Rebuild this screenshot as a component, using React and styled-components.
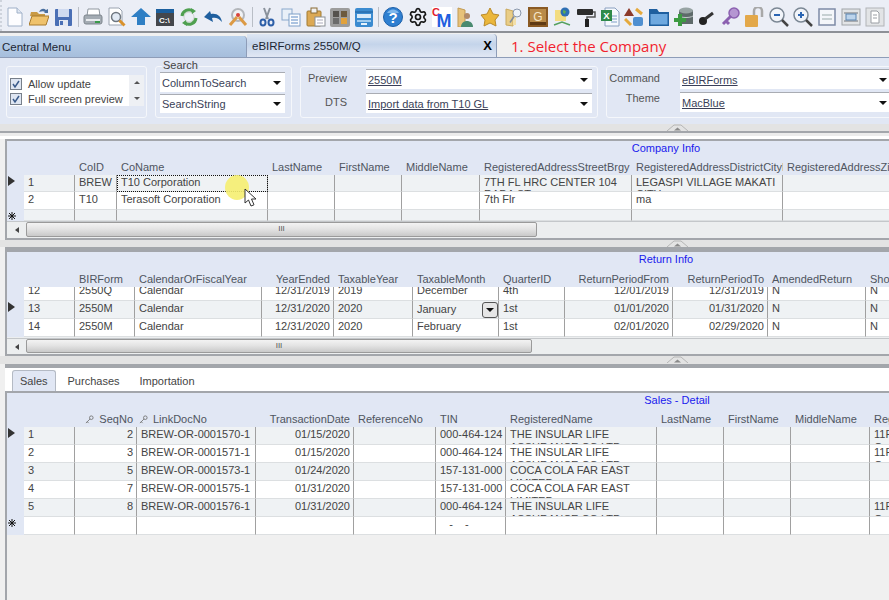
import React from 'react';
import styled, { createGlobalStyle } from 'styled-components';
import { Settings } from 'lucide-react';

const Global = createGlobalStyle`
  html, body { margin: 0; padding: 0; background: #f0f0f0; }
  body { font-family: "Liberation Sans", Arial, sans-serif; font-size: 11px; color: #444; overflow: hidden; }
  * { box-sizing: border-box; }
`;

const Page = styled.div`
  width: 889px;
  height: 600px;
  overflow: hidden;
  display: flex;
  flex-direction: column;
  background: #f0f0f0;
`;

const Toolbar = styled.div`
  height: 31px;
  flex: none;
  display: flex;
  align-items: center;
  gap: 4.1px;
  padding: 3px 0 0 3px;
  background: #ebeef6;
  border-left: 2px dotted #ced3dc;
  margin: 0;
`;

const ToolSep = styled.div`
  width: 1px;
  height: 20px;
  background: #b9bec6;
  margin: 0 0.3px;
  flex: none;
`;

const ToolIcon = styled.svg`
  width: 20px;
  height: 20px;
  flex: none;
`;

const Gear = styled(Settings)`
  width: 20px;
  height: 20px;
  flex: none;
  color: #161616;
`;

const Dark = styled.div`
  height: 2px;
  flex: none;
  background: #8d9096;
`;

const TabBar = styled.div`
  height: 25px;
  flex: none;
  display: flex;
  background: #f0f0f0;
  border-bottom: 1px solid #8e9db8;
`;

const Tab = styled.div`
  width: ${p => p.$w}px;
  margin-top: ${p => (p.$active ? 1 : 3)}px;
  display: flex;
  flex: none;
  align-items: center;
  justify-content: space-between;
  padding: 0 4px 0 ${p => p.$pad}px;
  font-size: 11.5px;
  color: #1d2733;
  border-right: 1px solid #8e9db8;
  border-top-right-radius: 4px;
  background: ${p => p.$active
    ? 'linear-gradient(#dfe7f3, #c4d4ea 45%, #e1e7f4)'
    : 'linear-gradient(#b9d0ea, #a6bedc)'};
`;

const CloseX = styled.span`
  font-weight: bold;
  font-size: 13px;
  color: #000;
`;

const Hint = styled.div`
  margin: 3px 0 0 14px;
  font-family: "Open Sans", sans-serif;
  font-size: 15px;
  color: #f21f2f;
`;

const Options = styled.div`
  height: 66px;
  flex: none;
  display: flex;
  gap: 8px;
  padding: 8px 0 0 6px;
  background: #e1e7f4;
`;

const Group = styled.div`
  position: relative;
  width: ${p => p.$w}px;
  height: 52px;
  flex: none;
  border: 1px solid #f5f7fb;
  border-radius: 3px;
  display: flex;
  flex-direction: column;
  gap: ${p => p.$gap || 0}px;
  padding: ${p => p.$pad};
`;

const Legend = styled.span`
  position: absolute;
  left: 6px;
  top: -8px;
  padding: 0 1px;
  line-height: 13px;
  background: #e1e7f4;
  color: #444;
`;

const CheckList = styled.div`
  width: 135px;
  height: 31px;
  background: #fff;
  display: flex;
  justify-content: space-between;
`;

const Checks = styled.div`
  display: flex;
  flex-direction: column;
  padding: 1px 0 0 1px;
`;

const CheckRow = styled.div`
  height: 15px;
  display: flex;
  align-items: center;
  gap: 6px;
  color: #444;
`;

const CheckBox = styled.span`
  width: 12px;
  height: 12px;
  border: 1px solid #777f8a;
  background: #dfe6f2;
  display: flex;
`;

const ListScroll = styled.div`
  width: 15px;
  background: #eef0f4;
  display: flex;
  flex-direction: column;
  justify-content: space-around;
  align-items: center;
`;

const ScrollUp = styled.span`
  border-left: 3px solid transparent;
  border-right: 3px solid transparent;
  border-bottom: 3px solid #555;
`;

const ScrollDown = styled.span`
  border-left: 3px solid transparent;
  border-right: 3px solid transparent;
  border-top: 3px solid #555;
`;

const FieldRow = styled.div`
  display: flex;
  align-items: center;
  gap: ${p => p.$gap}px;
  height: 20px;
  flex: none;
`;

const FieldLabel = styled.span`
  color: #555;
  text-align: right;
  width: ${p => p.$w}px;
  flex: none;
  margin-bottom: ${p => (p.$lift ? 8 : 2)}px;
`;

const Combo = styled.div`
  width: ${p => p.$w}px;
  height: ${p => p.$h || 20}px;
  flex: none;
  background: #fff;
  border-top: 1px solid #a9acb3;
  display: flex;
  align-items: center;
  justify-content: space-between;
  padding: 0 4px 0 2px;
  color: #3a3f58;
  text-decoration: ${p => (p.$link ? 'underline' : 'none')};
`;

const ComboArrow = styled.span`
  width: 0;
  height: 0;
  border-left: 4px solid transparent;
  border-right: 4px solid transparent;
  border-top: 4px solid #111;
  flex: none;
`;

const Splitter = styled.div`
  position: relative;
  height: ${p => p.$h}px;
  flex: none;
  display: flex;
  flex-direction: column;
`;

const SplitBody = styled.div`
  flex: 1;
  background: #e3e3e3;
`;

const SplitLine = styled.div`
  height: ${p => p.$line}px;
  flex: none;
  margin-left: ${p => p.$inset}px;
  background: #a3a6ab;
`;

const Grip = styled.svg`
  position: absolute;
  left: 667px;
  top: 0;
  width: 21px;
  height: 7px;
`;

const PanelGap = styled.div`
  height: 6px;
  flex: none;
  background: #fff;
  border-top: 3px solid #ececec;
`;

const GridPanel = styled.div`
  position: relative;
  flex: none;
  height: ${p => p.$h}px;
  margin-left: 5px;
  border: solid #a3a6ab;
  border-width: ${p => p.$bw};
  background: #e1e7f4;
  overflow: hidden;
  display: flex;
  flex-direction: column;
`;

const GridTitle = styled.div`
  height: ${p => p.$h}px;
  flex: none;
  text-align: center;
  line-height: 14px;
  padding-left: ${p => p.$pl}px;
  color: #1a1aee;
`;

const HeaderRow = styled.div`
  display: flex;
  height: ${p => p.$h}px;
  flex: none;
  padding: ${p => p.$pt}px 0 0 17px;
  line-height: 14px;
  color: #4f5560;
  white-space: nowrap;
`;

const HeadCell = styled.div`
  width: ${p => p.$w}px;
  flex: none;
  overflow: hidden;
  padding: 0 4px;
  text-align: ${p => (p.$right ? 'right' : 'left')};
`;

const KeyIcon = styled.svg`
  width: 9px;
  height: 9px;
  margin: 0 5px 0 -2px;
  vertical-align: -1px;
`;

const Rows = styled.div`
  flex: none;
  height: ${p => p.$h}px;
  overflow: hidden;
  background: #eceeef;
`;

const RowShift = styled.div`
  margin-top: ${p => p.$top}px;
`;

const Row = styled.div`
  display: flex;
  position: relative;
  height: ${p => p.$h || 18}px;
  padding-left: 17px;
  background: #e1e7f4;
`;

const Marker = styled.span`
  position: absolute;
  left: 1px;
  top: 1px;
  width: 0;
  height: 0;
  border-top: 5px solid transparent;
  border-bottom: 5px solid transparent;
  border-left: 7px solid #333;
`;

const Star = styled.svg`
  position: absolute;
  left: 1px;
  top: 2px;
  width: 8px;
  height: 8px;
`;

const Cell = styled.div`
  position: relative;
  width: ${p => p.$w}px;
  flex: none;
  height: 100%;
  overflow: hidden;
  padding: ${p => (p.$low ? 2 : 1)}px 3px 0 4px;
  line-height: ${p => p.$lh || 13}px;
  color: #444;
  white-space: pre;
  text-align: ${p => (p.$right ? 'right' : 'left')};
  background: ${p => (p.$alt ? '#eff2f4' : '#fff')};
  border-right: 1px solid #a0a0a0;
  border-bottom: 1px solid #dcdfe1;
  ${p => p.$focus && 'outline: 1px dotted #111; outline-offset: -1px;'}
`;

const CellButton = styled.span`
  position: absolute;
  right: 0;
  top: 1px;
  width: 16px;
  height: 16px;
  border: 1px solid #555;
  border-radius: 3px;
  background: #e6e6e6;
  display: flex;
  align-items: center;
  justify-content: center;
`;

const Cursor = styled.div`
  position: absolute;
  left: 218px;
  top: 34px;
  width: 32px;
  height: 34px;
`;

const CursorSpot = styled.div`
  width: 24px;
  height: 25px;
  border-radius: 50%;
  background: #f5ee70;
  opacity: 0.9;
`;

const CursorIcon = styled.svg`
  position: absolute;
  left: 19px;
  top: 13px;
  width: 13px;
  height: 20px;
`;

const HScroll = styled.div`
  flex: 1;
  display: flex;
  align-items: flex-start;
  background: #eceeef;
  border-top: 1px solid #c4c7ca;
`;

const ScrollLeft = styled.span`
  width: 19px;
  height: 15px;
  flex: none;
  display: flex;
  align-items: center;
  justify-content: center;
  &::before {
    content: '';
    border-top: 3px solid transparent;
    border-bottom: 3px solid transparent;
    border-right: 4px solid #444;
  }
`;

const ScrollThumb = styled.div`
  width: ${p => p.$w}px;
  height: ${p => p.$h}px;
  flex: none;
  border: 1px solid #9a9a9a;
  border-radius: 2px;
  background: linear-gradient(#f3f3f3, #e4e4e4 45%, #c9c9c9);
  color: #555;
  font-size: 8px;
  line-height: 12px;
  text-align: center;
`;

const TabStrip = styled.div`
  height: 25px;
  flex: none;
  margin-left: 5px;
  display: flex;
  align-items: flex-end;
  gap: 4px;
  padding-left: 7px;
  background: #fff;
  border-bottom: 2px solid #a3a6ab;
`;

const SubTab = styled.div`
  height: 21px;
  padding: 5px 8px 0;
  line-height: 13px;
  color: #444;
  ${p => p.$active && `
    background: #e1e7f4;
    border: 1px solid #b4bac4;
    border-bottom: none;
    border-radius: 3px 3px 0 0;
    padding: 4px 7px 0;
  `}
`;

const Bottom = styled.div`
  flex: 1;
  margin-left: 5px;
  background: #f0f0f0;
  border-left: 2px solid #a3a6ab;
`;

const Icon = ({ children }) => (
  <ToolIcon viewBox="0 0 20 20">{children}</ToolIcon>
);

const svgFont = 'Liberation Sans';

const fileIcons = [
  <g key="new"><path d="M3 1h9l5 5v13H3z" fill="#fdfdff" stroke="#9fb0c8" /><path d="M12 1v5h5" fill="#dfe6f1" stroke="#9fb0c8" /></g>,
  <g key="open"><path d="M1 9l1-4h6l2 2h6v3z" fill="#c99a45" /><path d="M0 18L3 9h17l-3 9z" fill="#efc26c" stroke="#a87b2d" /><path d="M10 5c2-4 5-4 7-2l2-1v4h-4l1-1c-1-1-3-1-6 0z" fill="#4a6f9f" /></g>,
  <g key="save"><rect x="2" y="2" width="17" height="17" rx="1" fill="#4a6fb5" /><rect x="5" y="2" width="11" height="8" fill="#cfdaf0" /><rect x="6" y="13" width="9" height="6" fill="#e3e8f2" /><rect x="7" y="14" width="3" height="4" fill="#4a6fb5" /></g>,
];

const printIcons = [
  <g key="print"><path d="M5 2h11l1 7H4z" fill="#fff" stroke="#8f979f" /><rect x="1" y="8" width="18" height="9" rx="2" fill="#a3abb3" stroke="#7d858d" /><rect x="3" y="12" width="14" height="2" fill="#e8ebee" /><rect x="12" y="14" width="5" height="2" fill="#3a9a4a" /></g>,
  <g key="preview"><path d="M2 1h10l3 3v14H2z" fill="#fff" stroke="#9aa3b0" /><circle cx="9" cy="10" r="4.5" fill="#e3ebf5" stroke="#6f7780" strokeWidth="1.5" /><path d="M12.5 13.5l5 5" stroke="#d9912b" strokeWidth="3" /></g>,
  <path key="up" d="M10 1l10 9h-6v8H6v-8H0z" fill="#2f7fc4" />,
  <g key="cmd"><rect x="1" y="2" width="18" height="17" fill="#44474c" /><rect x="1" y="2" width="18" height="4" fill="#1b5f9e" /><text x="4" y="16" fontSize="8" fontWeight="bold" fill="#fff" fontFamily={svgFont}>C:\</text></g>,
  <g key="refresh"><circle cx="10" cy="10" r="5" fill="none" stroke="#cfd5cf" /><g fill="none" stroke="#4fa050" strokeWidth="3"><path d="M3 9a7 7 0 0 1 11-5" /><path d="M17 11a7 7 0 0 1-11 5" /></g><path d="M12 1l5 3-4 3zM8 19l-5-3 4-3z" fill="#4fa050" /></g>,
  <path key="undo" d="M1 10l6-6 1 3c6-1 10 2 11 8-3-4-7-5-10-4l1 4z" fill="#1f5f9f" />,
  <g key="tools"><circle cx="10" cy="8" r="6" fill="#f0f2f5" stroke="#b3b6bb" strokeWidth="2" /><circle cx="10" cy="8" r="2" fill="#d8433c" /><path d="M2 18l7-8M18 18l-7-8" stroke="#dc9a45" strokeWidth="3" /></g>,
];

const editIcons = [
  <g key="cut"><path d="M7 1l4 11M13 1L9 12" stroke="#8a929c" strokeWidth="2" fill="none" /><g fill="none" stroke="#2d5fa8" strokeWidth="2"><ellipse cx="6" cy="15.5" rx="2.5" ry="3" /><ellipse cx="14" cy="15.5" rx="2.5" ry="3" /></g></g>,
  <g key="copy"><rect x="1" y="2" width="10" height="11" fill="#e9f0f8" stroke="#8aa8cc" /><rect x="8" y="7" width="11" height="12" fill="#fbfcfe" stroke="#7f9fc8" /><path d="M10 10h7M10 13h7M10 16h7" stroke="#5c8ac4" /></g>,
  <g key="paste"><rect x="1" y="4" width="14" height="15" rx="1" fill="#dca954" stroke="#a07a33" /><rect x="5" y="1" width="6" height="5" fill="#f1f1f1" stroke="#8a6a33" /><rect x="9" y="10" width="10" height="9" fill="#fff" stroke="#8a8f96" /><path d="M11 13h6M11 16h6" stroke="#aab" /></g>,
  <g key="layout"><rect x="0" y="1" width="20" height="19" rx="2" fill="#9c9c9c" /><rect x="3" y="4" width="6" height="6" fill="#54514d" /><rect x="11" y="4" width="6" height="6" fill="#6c5a3e" /><rect x="3" y="11" width="6" height="6" fill="#6b6b6b" /><rect x="11" y="11" width="6" height="6" fill="#e2a23c" /></g>,
  <g key="card"><rect x="1" y="1" width="18" height="19" rx="2" fill="#3b8bd0" /><path d="M1 5h18" stroke="#1e5f9c" /><rect x="3" y="7" width="14" height="4" fill="#d8eafa" /><rect x="3" y="13" width="14" height="2" fill="#9fcbee" /><rect x="7" y="16" width="6" height="2" fill="#e6f2fb" /></g>,
];

const helpIcon = (
  <g><circle cx="10" cy="10" r="9.5" fill="#2f7fd1" stroke="#1c5fa8" /><path d="M4 6a7 7 0 0 1 12 0z" fill="#7fb8ec" /><text x="10" y="16" textAnchor="middle" fontSize="15" fontWeight="bold" fill="#fff" fontFamily={svgFont}>?</text></g>
);

const extraIcons = [
  <g key="cm"><rect x="0" y="0" width="20" height="20" fill="#fff" /><text x="0" y="8.5" fontSize="11" fontWeight="bold" fill="#e2202c" fontFamily={svgFont}>C</text><text x="4.5" y="20" fontSize="18" fontWeight="bold" fill="#1f5fe0" fontFamily={svgFont} textLength="15" lengthAdjust="spacingAndGlyphs">M</text></g>,
  <g key="person"><path d="M2 1l7 2v17H2z" fill="#e7c27a" stroke="#c39b52" /><circle cx="11" cy="9" r="3" fill="#b08a6a" /><path d="M5 20c0-8 12-8 12 0z" fill="#4a8a70" /></g>,
  <path key="star" d="M10 1l3 6 6 1-4 5 1 6-6-3-6 3 1-6-4-5 6-1z" fill="#ebb73c" stroke="#b98a2a" />,
  <g key="findfolder"><path d="M2 2l7 2v15l-7-1z" fill="#e9cd87" stroke="#c9a95f" /><path d="M9 4h3v14H9z" fill="#f2dfaa" /><circle cx="13" cy="6" r="4" fill="#eef3fa" stroke="#8a97ac" /><path d="M10 9.5l-4 6" stroke="#7f8a99" strokeWidth="1.5" /></g>,
  <g key="g"><rect x="0" y="0" width="20" height="20" fill="#8a5a24" /><rect x="2" y="2" width="16" height="13" fill="#b98b49" /><rect x="2" y="15" width="16" height="3" fill="#5f3a14" /><text x="10" y="13.5" textAnchor="middle" fontSize="12" fill="#f6e6c8" fontFamily={svgFont}>G</text></g>,
  <g key="globe"><path d="M3 3h11v11H3z" fill="#f3dc80" /><circle cx="13" cy="5" r="4.5" fill="#2d6fb3" /><path d="M11 3l3 1-1 3-2-1z" fill="#5cab55" /><path d="M2 18l8-3 8 3" stroke="#55a060" strokeWidth="1.5" fill="none" /></g>,
  <g key="roller"><rect x="1" y="2" width="16" height="6" rx="1" fill="#2c2c2c" /><path d="M17 5h2v5h-8v3" fill="none" stroke="#555" strokeWidth="1.5" /><rect x="9" y="12" width="4" height="8" fill="#222" /></g>,
  <g key="excel"><path d="M5 1h10l4 4v14H5z" fill="#f6f9fd" stroke="#8aa0c0" /><path d="M11 9h6M11 12h6M11 15h6" stroke="#7f9fc8" /><rect x="1" y="3" width="11" height="11" fill="#2f8a4a" /><text x="6.5" y="12" textAnchor="middle" fontSize="9.5" fontWeight="bold" fill="#fff" fontFamily={svgFont}>X</text></g>,
  <g key="convert"><path d="M5 1l5 8H0z" fill="#8c3a2a" /><rect x="9" y="10" width="10" height="9" rx="2" fill="#4f8fd0" /><path d="M1 12l6 6M12 2l6 5" stroke="#e5a93c" strokeWidth="3" /></g>,
  <g key="folder"><path d="M0 2h8l2 3h10v14H0z" fill="#1f5f9f" /><rect x="1.5" y="7" width="17" height="10.5" fill="#6ea8df" /></g>,
  <g key="db"><rect x="6" y="3" width="14" height="14" fill="#5e6a6a" /><ellipse cx="13" cy="3.5" rx="7" ry="3" fill="#98a4a4" /><path d="M6 9c3 2 11 2 14 0" stroke="#c0c8c8" fill="none" /><path d="M5 7h4v4h4v4H9v4H5v-4H1v-4h4z" fill="#3c9a42" /></g>,
  <g key="keyblack"><circle cx="6" cy="14" r="4" fill="#222" /><path d="M8 12l8-6" stroke="#333" strokeWidth="3" /></g>,
  <g key="keypurple"><circle cx="13" cy="6" r="5" fill="#b596d2" stroke="#8b60b0" strokeWidth="1.5" /><path d="M10 9l-8 8M5 14l3 3" stroke="#8b60b0" strokeWidth="3" /></g>,
  <g key="lock"><rect x="0" y="8" width="13" height="12" rx="1" fill="#e3a84a" /><path d="M9 8V4a4 4 0 0 1 8 0v6" fill="none" stroke="#a8a8a8" strokeWidth="2.5" /></g>,
  <g key="zoomout"><circle cx="8" cy="8" r="7" fill="#f2f5fa" stroke="#7b8794" strokeWidth="1.5" /><path d="M5 8h6" stroke="#2b65b3" strokeWidth="2" /><path d="M13 13l6 6" stroke="#444" strokeWidth="2.5" /></g>,
  <g key="zoomin"><circle cx="8" cy="8" r="7" fill="#f2f5fa" stroke="#7b8794" strokeWidth="1.5" /><path d="M5 8h6M8 5v6" stroke="#2b65b3" strokeWidth="2" /><path d="M13 13l6 6" stroke="#444" strokeWidth="2.5" /></g>,
  <g key="fit"><rect x="2" y="2" width="16" height="16" fill="#f4f6fa" stroke="#7e8aa6" strokeWidth="1.5" /><path d="M5 8h10M5 12h10" stroke="#9aa" /></g>,
  <g key="frame"><rect x="1" y="2" width="18" height="16" fill="#e2e4e6" stroke="#a0a4a8" /><path d="M3 6h14M3 14h14" stroke="#70757a" /><rect x="5" y="7" width="10" height="6" fill="#bcd4ec" stroke="#5c86b2" /></g>,
  <g key="page"><rect x="1" y="1" width="18" height="18" fill="#e2e4e6" stroke="#b2b4b8" /><path d="M6 4h6l2 2v10H6z" fill="#fff" stroke="#9a9ea4" /><path d="M8 8h4M8 11h4" stroke="#9a9ea4" /></g>,
];

const columns1 = [
  { w: 51, h: '' }, { w: 42, h: 'CoID' }, { w: 151, h: 'CoName' }, { w: 67, h: 'LastName' },
  { w: 67, h: 'FirstName' }, { w: 78, h: 'MiddleName' }, { w: 152, h: 'RegisteredAddressStreetBrgy' },
  { w: 151, h: 'RegisteredAddressDistrictCityPr' }, { w: 120, h: 'RegisteredAddressZip' },
];
const rows1 = [
  ['1', 'BREW', 'T10 Corporation', '', '', '', '7TH FL HRC CENTER 104\nRADA ST', 'LEGASPI VILLAGE MAKATI\nCITY', ''],
  ['2', 'T10', 'Terasoft Corporation', '', '', '', '7th Flr', 'ma', ''],
  ['', '', '', '', '', '', '', '', ''],
];

const columns2 = [
  { w: 51, h: '' }, { w: 60, h: 'BIRForm' }, { w: 127, h: 'CalendarOrFiscalYear' },
  { w: 72, h: 'YearEnded', right: true }, { w: 79, h: 'TaxableYear' }, { w: 86, h: 'TaxableMonth' },
  { w: 66, h: 'QuarterID' }, { w: 108, h: 'ReturnPeriodFrom', right: true },
  { w: 95, h: 'ReturnPeriodTo', right: true }, { w: 98, h: 'AmendedReturn' }, { w: 60, h: 'ShortPeriod' },
];
const rows2 = [
  ['12', '2550Q', 'Calendar', '12/31/2019', '2019', 'December', '4th', '12/01/2019', '12/31/2019', 'N', 'N'],
  ['13', '2550M', 'Calendar', '12/31/2020', '2020', 'January', '1st', '01/01/2020', '01/31/2020', 'N', 'N'],
  ['14', '2550M', 'Calendar', '12/31/2020', '2020', 'February', '1st', '02/01/2020', '02/29/2020', 'N', 'N'],
];

const columns3 = [
  { w: 51, h: '' }, { w: 62, h: 'SeqNo', right: true, key: true }, { w: 119, h: 'LinkDocNo', key: true },
  { w: 98, h: 'TransactionDate', right: true }, { w: 82, h: 'ReferenceNo' }, { w: 70, h: 'TIN' },
  { w: 151, h: 'RegisteredName' }, { w: 67, h: 'LastName' }, { w: 67, h: 'FirstName' },
  { w: 79, h: 'MiddleName' }, { w: 60, h: 'RegisteredAddress' },
];
const insular = 'THE INSULAR LIFE\nASSURANCE CO LTD';
const coca = 'COCA COLA FAR EAST\nLIMITED';
const rows3 = [
  ['1', '2', 'BREW-OR-0001570-1', '01/15/2020', '', '000-464-124', insular, '', '', '', '11F\nG'],
  ['2', '3', 'BREW-OR-0001571-1', '01/15/2020', '', '000-464-124', insular, '', '', '', '11F\nG'],
  ['3', '5', 'BREW-OR-0001573-1', '01/24/2020', '', '157-131-000', coca, '', '', '', ''],
  ['4', '7', 'BREW-OR-0001575-1', '01/31/2020', '', '157-131-000', coca, '', '', '', ''],
  ['5', '8', 'BREW-OR-0001576-1', '01/31/2020', '', '000-464-124', insular, '', '', '', '11F\nG'],
  ['', '', '', '', '', '   -    -', '', '', '', '', ''],
];

const Key = () => (
  <KeyIcon viewBox="0 0 10 10">
    <circle cx="7" cy="3" r="2" fill="none" stroke="#777" />
    <path d="M5.5 4.5L1 9M2.5 7.5l1.5 1.5" stroke="#777" fill="none" />
  </KeyIcon>
);

const Head = ({ columns, h, pt }) => (
  <HeaderRow $h={h} $pt={pt}>
    {columns.map((c, i) => (
      <HeadCell key={i} $w={c.w} $right={c.right}>
        {c.key && <Key />}{c.h}
      </HeadCell>
    ))}
  </HeaderRow>
);

const Check = () => (
  <CheckBox>
    <svg viewBox="0 0 10 10" width="10" height="10">
      <path d="M2 5l2 3 4-6" fill="none" stroke="#3a5a8a" strokeWidth="1.5" />
    </svg>
  </CheckBox>
);

const NewRowStar = () => (
  <Star viewBox="0 0 8 8">
    <path d="M4 0v8M0 4h8M1 1l6 6M7 1L1 7" stroke="#111" strokeWidth="1" />
  </Star>
);

const Split = ({ h, line, inset }) => (
  <Splitter $h={h}>
    <SplitBody />
    <SplitLine $line={line} $inset={inset} />
    <Grip viewBox="0 0 21 7">
      <path d="M0 7L7 1h7l7 6" fill="none" stroke="#b5b5b5" />
      <path d="M7 6.5l3.5-3 3.5 3z" fill="#8a8a8a" />
    </Grip>
  </Splitter>
);

export default function App() {
  return (
    <Page>
      <Global />
      <Toolbar>
        {fileIcons.map((x, i) => <Icon key={i}>{x}</Icon>)}
        <ToolSep />
        {printIcons.map((x, i) => <Icon key={i}>{x}</Icon>)}
        <ToolSep />
        {editIcons.map((x, i) => <Icon key={i}>{x}</Icon>)}
        <ToolSep />
        <Icon>{helpIcon}</Icon>
        <Gear strokeWidth={2} />
        {extraIcons.map((x, i) => <Icon key={i}>{x}</Icon>)}
      </Toolbar>
      <Dark />
      <TabBar>
        <Tab $w={247} $pad={2}>Central Menu</Tab>
        <Tab $w={250} $pad={5} $active>eBIRForms 2550M/Q<CloseX>X</CloseX></Tab>
        <Hint>1. Select the Company</Hint>
      </TabBar>
      <Options>
        <Group $w={141} $pad="8px 0 0 2px">
          <CheckList>
            <Checks>
              <CheckRow><Check />Allow update</CheckRow>
              <CheckRow><Check />Full screen preview</CheckRow>
            </Checks>
            <ListScroll><ScrollUp /><ScrollDown /></ListScroll>
          </CheckList>
        </Group>
        <Group $w={137} $pad="5px 0 0 4px" $gap={2}>
          <Legend>Search</Legend>
          <Combo $w={125}>ColumnToSearch<ComboArrow /></Combo>
          <Combo $w={125} $h={19}>SearchString<ComboArrow /></Combo>
        </Group>
        <Group $w={298} $pad="2px 0 0 0" $gap={4}>
          <FieldRow $gap={19}><FieldLabel $w={46}>Preview</FieldLabel><Combo $w={226} $link>2550M<ComboArrow /></Combo></FieldRow>
          <FieldRow $gap={19}><FieldLabel $w={46}>DTS</FieldLabel><Combo $w={226} $link>Import data from T10 GL<ComboArrow /></Combo></FieldRow>
        </Group>
        <Group $w={300} $pad="2px 0 0 0" $gap={3}>
          <FieldRow $gap={20}><FieldLabel $w={53}>Command</FieldLabel><Combo $w={211} $link>eBIRForms<ComboArrow /></Combo></FieldRow>
          <FieldRow $gap={20}><FieldLabel $w={53} $lift>Theme</FieldLabel><Combo $w={211} $link>MacBlue<ComboArrow /></Combo></FieldRow>
        </Group>
      </Options>
      <Split h={9} line={2} inset={0} />
      <PanelGap />
      <GridPanel $h={101} $bw="2px 0 2px 2px">
        <GridTitle $h={17} $pl={436}>Company Info</GridTitle>
        <Head columns={columns1} h={17} pt={2} />
        {rows1.map((r, ri) => (
          <Row key={ri} $h={ri === 2 ? 11 : ri === 0 ? 17 : 18}>
            {ri === 0 && <Marker />}
            {ri === 2 && <NewRowStar />}
            {columns1.map((c, i) => (
              <Cell key={i} $w={c.w} $alt={ri !== 1} $focus={ri === 0 && i === 2} $lh={ri === 0 ? 12 : 13}>{r[i]}</Cell>
            ))}
          </Row>
        ))}
        <HScroll><ScrollLeft /><ScrollThumb $w={511} $h={15}>III</ScrollThumb></HScroll>
        <Cursor>
          <CursorSpot />
          <CursorIcon viewBox="0 0 13 20">
            <path d="M1 1v14l3.5-3 2.5 6 3-1.2-2.5-5.8H12z" fill="#fff" stroke="#333" />
          </CursorIcon>
        </Cursor>
      </GridPanel>
      <Split h={12} line={5} inset={5} />
      <GridPanel $h={104} $bw="0 0 2px 2px">
        <GridTitle $h={16} $pl={436}>Return Info</GridTitle>
        <Head columns={columns2} h={19} pt={4} />
        <Rows $h={51}>
          <RowShift $top={-4}>
            {rows2.map((r, ri) => (
              <Row key={ri}>
                {ri === 1 && <Marker />}
                {columns2.map((c, i) => (
                  <Cell key={i} $w={c.w} $right={c.right} $alt={ri === 1} $low={ri === 1 && i === 5}>
                    {r[i]}
                    {ri === 1 && i === 5 && (
                      <CellButton>
                        <ComboArrow />
                      </CellButton>
                    )}
                  </Cell>
                ))}
              </Row>
            ))}
          </RowShift>
        </Rows>
        <HScroll><ScrollLeft /><ScrollThumb $w={506} $h={14}>III</ScrollThumb></HScroll>
      </GridPanel>
      <Split h={12} line={4} inset={5} />
      <TabStrip>
        <SubTab $active>Sales</SubTab>
        <SubTab>Purchases</SubTab>
        <SubTab>Importation</SubTab>
      </TabStrip>
      <GridPanel $h={142} $bw="0 0 0 2px">
        <GridTitle $h={15} $pl={458}>Sales - Detail</GridTitle>
        <Head columns={columns3} h={19} pt={4} />
        {rows3.map((r, ri) => (
          <Row key={ri}>
            {ri === 0 && <Marker />}
            {ri === 5 && <NewRowStar />}
            {columns3.map((c, i) => (
              <Cell key={i} $w={c.w} $right={c.right} $alt={ri % 2 === 0 && ri !== 5}>{r[i]}</Cell>
            ))}
          </Row>
        ))}
      </GridPanel>
      <Bottom />
    </Page>
  );
}
